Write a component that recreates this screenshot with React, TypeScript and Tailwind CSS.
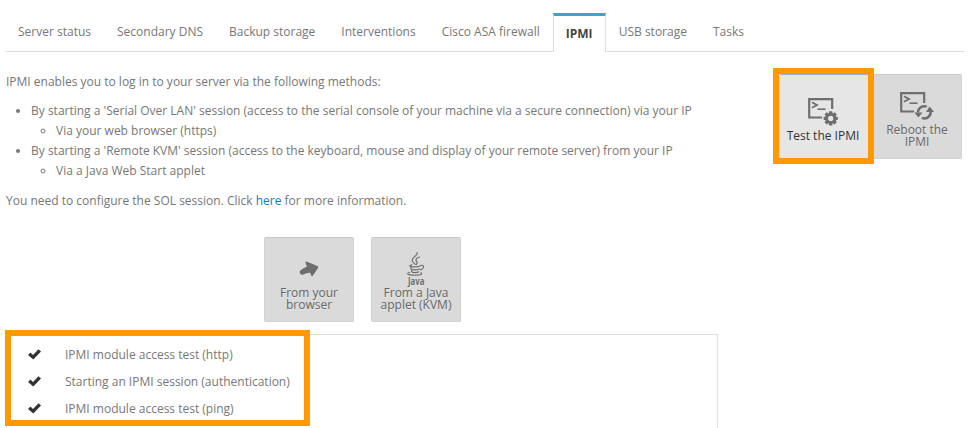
import type { ReactNode } from "react";

function TerminalFrame() {
  return (
    <g fill="none" stroke="#6e6e6e">
      <path d="M14 19.5H1.2V1.2H24.2V11" strokeWidth="2.2" />
      <path d="M4 4.3l5 2.7-5 2.7" strokeWidth="1.8" />
      <path d="M9.5 11.2H17.5" strokeWidth="1.6" />
    </g>
  );
}

function TerminalGear() {
  const teeth = [0, 45, 90, 135, 180, 225, 270, 315];
  return (
    <svg className="block h-[29px] w-[30px]" viewBox="0 0 30 29">
      <TerminalFrame />
      <g transform="translate(22.7 20.4)">
        {teeth.map((a) => (
          <rect key={a} x="-1.7" y="-7.1" width="3.4" height="4" rx="0.5" fill="#6e6e6e" transform={`rotate(${a})`} />
        ))}
        <circle r="4.1" fill="none" stroke="#6e6e6e" strokeWidth="2.9" />
      </g>
    </svg>
  );
}

function TerminalRefresh() {
  return (
    <svg className="block h-[29px] w-[35px]" viewBox="0 0 35 29">
      <TerminalFrame />
      <g fill="none" stroke="#6e6e6e" strokeWidth="2.5">
        <path d="M17.9 20.5A6.4 6.4 0 0 1 26.8 14.7" />
        <path d="M30.7 20A6.4 6.4 0 0 1 21.8 25.9" />
      </g>
      <path d="M26 20h8.2l-4.6-5.4z" fill="#6e6e6e" />
      <path d="M14.4 20.4h8.2l-4.3 5.2z" fill="#6e6e6e" />
    </svg>
  );
}

function ArrowIcon() {
  return (
    <svg className="block h-[16px] w-[20px]" viewBox="0 0 20 16">
      <path d="M6.4 1.6Q6.4.4 7.6.6L18.4 4.9Q19.8 5.6 19 6.9L13.6 14.9Q12.6 15.8 12.2 14.5L11.1 11.7Q8 11.3 4.4 13.5Q1.9 14.4.8 12.1Q0 9.9 2.2 8.7Q5 6.6 7.9 5.8Z" fill="#6e6e6e" />
    </svg>
  );
}

function JavaIcon() {
  return (
    <svg className="block h-[36px] w-[18px]" viewBox="0 0 18 36">
      <g fill="none" stroke="#6e6e6e" strokeLinecap="round" strokeWidth="1.2">
        <path d="M10.1 .6C12 4-.5 6.6 8.2 12.3" />
        <path d="M12.6 5C7.7 6.6 8.6 8.6 10 10Q10.6 11.4 9.2 12.6" />
        <path d="M4.8 12.7C-1.4 15.1 9.2 15.5 13.3 14" />
        <path d="M4.1 15.8C2.4 18.3 9.5 18.4 12.4 17" />
        <path d="M4.6 18.7C3.7 20.9 9.2 21 11.7 19.9" />
        <path d="M14 13.4C18 12.6 17 17 13.5 17.8" />
        <path d="M2.6 20.3C-2.8 22.4 4.5 23.4 9 23.2Q16.3 22.9 14.1 20.8" />
      </g>
      <text x="1" y="32.6" fontFamily="Open Sans, sans-serif" fontSize="10.5" fontWeight="700" fill="#6e6e6e" textLength="16.5" lengthAdjust="spacingAndGlyphs">Java</text>
    </svg>
  );
}

function Tile({ icon, children, active = false, pad }: { icon: ReactNode; children: ReactNode; active?: boolean; pad: string }) {
  return (
    <button
      className={`flex h-[85px] w-[90px] shrink-0 flex-col items-center rounded-[2px] border text-[12px] leading-[12px] ${pad} ${
        active
          ? "border-[#c9d3e4] border-t-[#8aaee0] bg-[#e6e6e6] text-[#333]"
          : "border-[#d2d2d2] border-t-[#c8c8c8] bg-[#dadada] text-[#666] [text-shadow:0_1px_0_#e8e8e8]"
      }`}
    >
      {icon}
      {children}
    </button>
  );
}

function Check() {
  return (
    <svg className="block h-[11px] w-[13px]" viewBox="0 0 13 11">
      <path d="M0 6L2.5 3.6L5 6L10.5 .2L13 2.6L5.3 10.6Z" fill="#333" />
    </svg>
  );
}

const before = ["Server status", "Secondary DNS", "Backup storage", "Interventions", "Cisco ASA firewall"];
const after = ["USB storage", "Tasks"];
const tests = ["IPMI module access test (http)", "Starting an IPMI session (authentication)", "IPMI module access test (ping)"];

function Tab({ label }: { label: string }) {
  return <li className="h-[39px] shrink-0 border-b border-[#ddd] px-[13px] pt-[9px] whitespace-nowrap">{label}</li>;
}

export default function App() {
  return (
    <div className="relative h-[428px] w-[972px] overflow-hidden bg-white font-['Open_Sans','Liberation_Sans',sans-serif] text-[12px] leading-5 text-[#777]">
      <ul className="flex h-[52px] pt-[13px] pr-2 pl-[6px]">
        <li className="flex">
          <ul className="flex [&>li:first-child]:pl-[12px]">
            {before.map((t) => <Tab key={t} label={t} />)}
          </ul>
        </li>
        <li className="h-[39px] w-[53px] shrink-0 border-x border-t-3 border-x-[#ddd] border-t-[#3aa6c5] bg-white pt-[8px] text-center font-bold text-[#444]">IPMI</li>
        {after.map((t) => <Tab key={t} label={t} />)}
        <li className="h-[39px] flex-1 border-b border-[#ddd]" />
      </ul>

      <div className="flex h-[185px] justify-between pr-[10px] pl-[6px]">
        <div className="pt-[20px] whitespace-nowrap">
          <p>IPMI enables you to log in to your server via the following methods:</p>
          <ul className="mt-[9px] list-disc pl-[25px]">
            <li>
              By starting a 'Serial Over LAN' session (access to the serial console of your machine via a secure connection) via your IP
              <ul className="list-[circle] pl-[25px]"><li>Via your web browser (https)</li></ul>
            </li>
            <li>
              By starting a 'Remote KVM' session (access to the keyboard, mouse and display of your remote server) from your IP
              <ul className="list-[circle] pl-[25px]"><li>Via a Java Web Start applet</li></ul>
            </li>
          </ul>
          <p className="mt-[10px]">
            You need to configure the SOL session. Click <a className="text-[#0a7fc8]">here</a> for more information.
          </p>
        </div>
        <div className="flex gap-[3px] pt-[22px]">
          <Tile active pad="pt-[23px] pr-[2px]" icon={<TerminalGear />}><span className="mt-[3px] whitespace-nowrap">Test the IPMI</span></Tile>
          <Tile pad="pt-[17px]" icon={<TerminalRefresh />}><span className="mt-[3px]">Reboot the<br />IPMI</span></Tile>
        </div>
      </div>

      <div className="flex h-[97px] gap-[17px] pl-[264px]">
        <Tile pad="pt-[23px]" icon={<ArrowIcon />}><span className="mt-[10px]">From your<br />browser</span></Tile>
        <Tile pad="pt-[14px]" icon={<JavaIcon />}><span className="-mt-px">From a Java<br />applet (KVM)</span></Tile>
      </div>

      <ul className="ml-[6px] h-[110px] w-[712px] border border-[#ddd] pt-[6px]">
        {tests.map((t) => (
          <li key={t} className="flex h-[27px] items-center gap-[24px] pl-[21px]">
            <Check />
            <span>{t}</span>
          </li>
        ))}
      </ul>

      <div className="absolute top-[68px] left-[773px] h-[96px] w-[101px] border-6 border-[#ff9900]" />
      <div className="absolute top-[330px] left-[5px] h-[96px] w-[305px] border-6 border-[#ff9900]" />
    </div>
  );
}
